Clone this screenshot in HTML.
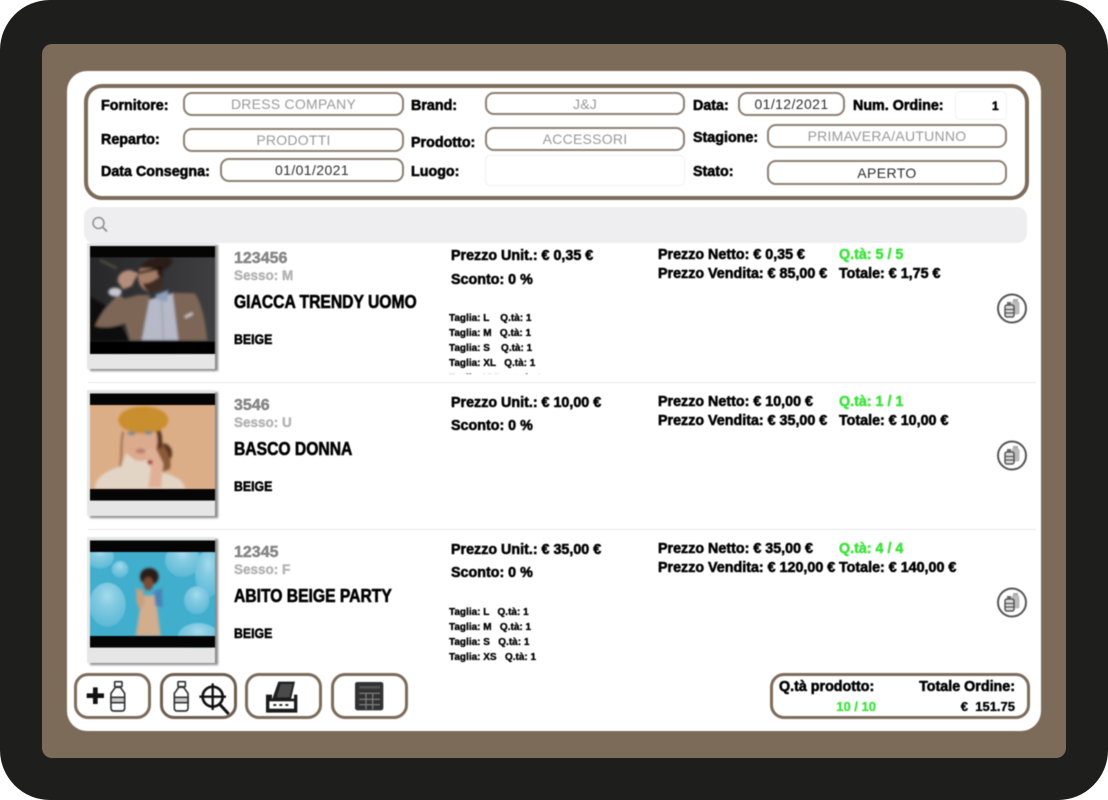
<!DOCTYPE html>
<html><head><meta charset="utf-8"><style>
html,body{margin:0;padding:0;background:#fff}
#p{position:relative;width:1108px;height:800px;overflow:hidden;font-family:"Liberation Sans",sans-serif}
#o{position:absolute;left:0;top:0;width:1108px;height:800px;background:#1e1e1c;border-radius:50px}
#b{position:absolute;left:42px;top:44px;width:1024px;height:714px;background:#7d6b5a;border-radius:10px}
#c{position:absolute;left:0;top:0;width:1108px;height:800px;filter:blur(.5px)}
#w{position:absolute;left:67px;top:71px;width:974px;height:660px;background:#fff;border-radius:20px}
.a{position:absolute;white-space:nowrap;line-height:16px}
.l{font-weight:bold;font-size:14.3px;color:#000;-webkit-text-stroke:.55px #000;transform-origin:0 50%;margin-top:1px}
.t{font-size:18px;transform:scaleX(.87);-webkit-text-stroke:.6px #000;margin-top:0}
.e{font-size:14px;transform:scaleX(.88);margin-top:0}
.n{color:#858585;-webkit-text-stroke:.45px #858585;font-size:16px;margin-top:0}
.x{color:#b4b4b4;-webkit-text-stroke:.45px #b4b4b4;font-size:13.500px}
.f{position:absolute;box-sizing:border-box;border:2px solid #8d7f72;border-radius:9px;background:#fff;text-align:center;font-size:14px;color:#999;display:flex;align-items:center;justify-content:center;letter-spacing:.25px}
.k{color:#2e2e2e;letter-spacing:.4px}
.s{position:absolute;left:449px;font-weight:bold;font-size:10px;line-height:15px;-webkit-text-stroke:.35px #000;white-space:pre;overflow:hidden}
.card{position:absolute;left:87px;width:128px;height:126px;background:#e6e6e6;box-shadow:3px 2px 2px #8a8a8a}
.sep{position:absolute;left:88px;width:948px;height:1px;background:#e8e8ea}
.btn{position:absolute;top:673px;width:77px;height:46px;box-sizing:border-box;border:3px solid #7d6b5a;border-radius:14px;background:#fff}
svg{position:absolute}
.g{color:#37e437;-webkit-text-stroke:.45px #37e437}
</style></head><body><div id="p">
<div id="o"></div><div id="b"></div>
<div id="c"><div id="w"></div>
<div style="position:absolute;left:84px;top:84px;width:945px;height:116px;box-sizing:border-box;border:4px solid #7d6b5a;border-radius:18px"></div>

<span class="a l" style="left:101px;top:97px">Fornitore:</span>
<span class="a l" style="left:101px;top:131px">Reparto:</span>
<span class="a l" style="left:101px;top:163px">Data Consegna:</span>
<span class="a l" style="left:411px;top:97px">Brand:</span>
<span class="a l" style="left:411px;top:134px">Prodotto:</span>
<span class="a l" style="left:411px;top:163px">Luogo:</span>
<span class="a l" style="left:693px;top:97px">Data:</span>
<span class="a l" style="left:853px;top:97px">Num. Ordine:</span>
<span class="a l" style="left:693px;top:129px">Stagione:</span>
<span class="a l" style="left:693px;top:163px">Stato:</span>

<div class="f" style="left:183px;top:92px;width:221px;height:24px">DRESS COMPANY</div>
<div class="f" style="left:183px;top:128px;width:221px;height:24px">PRODOTTI</div>
<div class="f k" style="left:220px;top:158px;width:184px;height:24px">01/01/2021</div>
<div class="f" style="left:485px;top:92px;width:200px;height:23px">J&amp;J</div>
<div class="f" style="left:485px;top:127px;width:200px;height:24px">ACCESSORI</div>
<div class="f" style="left:485px;top:155px;width:200px;height:31px;border:1px solid #f0f0f0;border-radius:5px"></div>
<div class="f k" style="left:738px;top:92px;width:107px;height:24px">01/12/2021</div>
<div class="f" style="left:955px;top:91px;width:52px;height:29px;border:1px solid #f0f0f0;border-radius:5px"></div>
<span class="a l" style="left:992px;top:97px;font-size:12px">1</span>
<div class="f" style="left:767px;top:124px;width:240px;height:24px">PRIMAVERA/AUTUNNO</div>
<div class="f k" style="left:767px;top:160px;width:240px;height:25px">APERTO</div>

<div style="position:absolute;left:84px;top:207px;width:943px;height:36px;background:#eeeef0;border-radius:10px"></div>
<svg style="left:90px;top:215px" width="20" height="20" viewBox="0 0 20 20"><circle cx="8.500" cy="8" r="5.500" fill="none" stroke="#8e8e93" stroke-width="1.500"/><path d="M12.500 12l4.500 4.500" stroke="#8e8e93" stroke-width="1.800"/></svg>

<!-- Row 1 -->
<div class="card" style="top:243px"></div>
<svg style="left:80px;top:240px" width="150" height="140" viewBox="0 0 450 420"><defs>
<filter id="fb" x="-10%" y="-10%" width="120%" height="120%"><feGaussianBlur stdDeviation="4"/></filter>
<filter id="fs"><feGaussianBlur stdDeviation="1.500"/></filter>
<clipPath id="c1"><rect x="30" y="18" width="375" height="324"/></clipPath><clipPath id="c2"><rect x="30" y="25" width="375" height="322"/></clipPath>
<radialGradient id="bl" cx=".5" cy=".3" r=".7"><stop offset="0" stop-color="#a6dcec"/><stop offset=".35" stop-color="#84cbe2"/><stop offset="1" stop-color="#5cb9d6"/></radialGradient>
<linearGradient id="mb" x1="0" y1="0" x2="1" y2="0"><stop offset="0" stop-color="#27272a"/><stop offset="1" stop-color="#3f3f42"/></linearGradient>
</defs>
<g clip-path="url(#c1)"><rect x="30" y="18" width="375" height="324" fill="url(#mb)"/>
<g filter="url(#fb)">
<path d="M30 170L100 210L150 305H30Z" fill="#0d0d0e"/>
<path d="M60 60L110 85" stroke="#5c5644" stroke-width="6"/>
<path d="M45 258C65 215 90 185 115 165L135 175L175 165L210 165L188 302H150L135 250C100 262 70 265 45 258Z" fill="#7d6656"/>
<path d="M272 158L345 160C370 200 378 260 382 302H292Z" fill="#7d6656"/>
<path d="M208 178L278 160L295 302H185Z" fill="#b6b9c8"/>
<path d="M315 232L338 220" stroke="#cfcfcf" stroke-width="7"/>
<path d="M245 175L250 300" stroke="#93949f" stroke-width="3"/>
<path d="M225 165L265 150L262 185L235 180Z" fill="#8fa0bb"/>
<ellipse cx="208" cy="110" rx="34" ry="44" fill="#a47e68"/>
<path d="M190 128C205 135 225 118 245 105L248 130C240 150 225 160 208 155C195 150 190 140 190 128Z" fill="#3c2a22"/>
<path d="M180 85C190 60 225 50 250 52L262 48L280 62L268 80L250 90L247 115L232 105L230 85Z" fill="#2a1d18"/>
<path d="M170 100L245 84" stroke="#0e0e0e" stroke-width="7"/>
<path d="M113 125C112 105 125 92 150 90L175 100L165 118L155 138L130 148Z" fill="#b48e7c"/>
<ellipse cx="105" cy="156" rx="20" ry="13" fill="#c8c8d0"/>
</g><rect x="30" y="18" width="375" height="34" fill="#050505"/><rect x="30" y="305" width="375" height="37" fill="#050505" filter="url(#fs)"/></g></svg>
<span class="a l n" style="left:234px;top:251px">123456</span>
<span class="a l x" style="left:234px;top:267px">Sesso: M</span>
<span class="a l t" style="left:234px;top:294px">GIACCA TRENDY UOMO</span>
<span class="a l e" style="left:234px;top:331px">BEIGE</span>
<span class="a l" style="left:451px;top:247px">Prezzo Unit.: € 0,35 €</span>
<span class="a l" style="left:451px;top:271px">Sconto: 0 %</span>
<div class="s" style="top:311px;height:63px">Taglia: L    Q.tà: 1
Taglia: M   Q.tà: 1
Taglia: S    Q.tà: 1
Taglia: XL   Q.tà: 1
Taglia: XXL   Q.tà: 1</div>
<span class="a l" style="left:658px;top:246px">Prezzo Netto: € 0,35 €</span>
<span class="a l" style="left:658px;top:265px">Prezzo Vendita: € 85,00 €</span>
<span class="a l g" style="left:839px;top:246px">Q.tà: 5 / 5</span>
<span class="a l" style="left:839px;top:265px">Totale: € 1,75 €</span>
<div class="sep" style="top:382px"></div>

<!-- Row 2 -->
<div class="card" style="top:390px"></div>
<svg style="left:80px;top:385px" width="150" height="140" viewBox="0 0 450 420">
<g clip-path="url(#c2)"><rect x="30" y="25" width="375" height="322" fill="#dcae88"/>
<g filter="url(#fb)">
<ellipse cx="250" cy="205" rx="26" ry="30" fill="#54301f"/>
<path d="M232 150C250 180 280 220 270 252L245 262L225 180Z" fill="#8a5a38"/>
<path d="M45 312C45 280 70 262 125 242L138 205L200 225L240 262C280 268 312 285 316 312Z" fill="#e3d5c6"/>
<ellipse cx="182" cy="168" rx="50" ry="60" fill="#dcaa8c"/>
<path d="M130 140C120 175 128 215 120 245" stroke="#8c5a3c" stroke-width="5" fill="none"/>
<path d="M232 130C244 160 240 180 238 190" stroke="#54301f" stroke-width="14" fill="none"/>
<ellipse cx="190" cy="105" rx="75" ry="41" fill="#c98e2e"/>
<path d="M193 195L226 188L250 236L243 308H205L212 250Z" fill="#e0b096"/><ellipse cx="210" cy="232" rx="8" ry="7" fill="#a8242a"/>
<ellipse cx="155" cy="145" rx="12" ry="6" fill="#7d888c"/><ellipse cx="205" cy="143" rx="12" ry="6" fill="#7d888c"/><ellipse cx="182" cy="198" rx="15" ry="7" fill="#b87c6c"/>
</g><rect x="30" y="25" width="375" height="35" fill="#050505"/><rect x="30" y="312" width="375" height="35" fill="#050505"/></g></svg>
<span class="a l n" style="left:234px;top:398px">3546</span>
<span class="a l x" style="left:234px;top:414px">Sesso: U</span>
<span class="a l t" style="left:234px;top:441px">BASCO DONNA</span>
<span class="a l e" style="left:234px;top:478px">BEIGE</span>
<span class="a l" style="left:451px;top:394px">Prezzo Unit.: € 10,00 €</span>
<span class="a l" style="left:451px;top:417px">Sconto: 0 %</span>
<span class="a l" style="left:658px;top:393px">Prezzo Netto: € 10,00 €</span>
<span class="a l" style="left:658px;top:412px">Prezzo Vendita: € 35,00 €</span>
<span class="a l g" style="left:839px;top:393px">Q.tà: 1 / 1</span>
<span class="a l" style="left:839px;top:412px">Totale: € 10,00 €</span>
<div class="sep" style="top:529px"></div>

<!-- Row 3 -->
<div class="card" style="top:537px"></div>
<svg style="left:80px;top:532px" width="150" height="140" viewBox="0 0 450 420">
<g clip-path="url(#c2)"><rect x="30" y="25" width="375" height="322" fill="#41aecd"/>
<g filter="url(#fs)">
<ellipse cx="60" cy="75" rx="42" ry="35" fill="url(#bl)"/><circle cx="120" cy="112" r="25" fill="url(#bl)"/>
<ellipse cx="308" cy="85" rx="53" ry="50" fill="url(#bl)"/><ellipse cx="385" cy="125" rx="40" ry="70" fill="url(#bl)"/>
<ellipse cx="82" cy="218" rx="55" ry="66" fill="url(#bl)"/><ellipse cx="350" cy="205" rx="38" ry="42" fill="url(#bl)"/><ellipse cx="355" cy="315" rx="62" ry="42" fill="url(#bl)"/>
</g>
<g filter="url(#fb)">
<path d="M186 190L226 190L242 312H167Z" fill="#d2ad8e"/>
<path d="M168 168L190 175L192 215L180 236L170 212Z" fill="#c99f80"/><path d="M222 178L246 168L248 225L226 222Z" fill="#4a82b6"/>
<ellipse cx="208" cy="134" rx="28" ry="26" fill="#2a1a14"/><ellipse cx="205" cy="155" rx="15" ry="20" fill="#7a4c36"/>
</g><rect x="30" y="25" width="375" height="35" fill="#050505"/><rect x="30" y="312" width="375" height="35" fill="#050505"/></g></svg>
<span class="a l n" style="left:234px;top:545px">12345</span>
<span class="a l x" style="left:234px;top:561px">Sesso: F</span>
<span class="a l t" style="left:234px;top:588px">ABITO BEIGE PARTY</span>
<span class="a l e" style="left:234px;top:625px">BEIGE</span>
<span class="a l" style="left:451px;top:541px">Prezzo Unit.: € 35,00 €</span>
<span class="a l" style="left:451px;top:564px">Sconto: 0 %</span>
<div class="s" style="top:605px">Taglia: L   Q.tà: 1
Taglia: M   Q.tà: 1
Taglia: S   Q.tà: 1
Taglia: XS   Q.tà: 1</div>
<span class="a l" style="left:658px;top:540px">Prezzo Netto: € 35,00 €</span>
<span class="a l" style="left:658px;top:559px">Prezzo Vendita: € 120,00 €</span>
<span class="a l g" style="left:839px;top:540px">Q.tà: 4 / 4</span>
<span class="a l" style="left:839px;top:559px">Totale: € 140,00 €</span>

<!-- Round stock icons -->
<svg style="left:996px;top:293px" width="32" height="32" viewBox="0 0 32 32"><circle cx="16" cy="15.500" r="14" fill="#fff" stroke="#555" stroke-width="2"/><rect x="17" y="6" width="5" height="3" fill="#aaa"/><rect x="15.500" y="8.500" width="8" height="13" rx="2" fill="#bbb"/><rect x="11" y="9" width="4" height="3" fill="#666"/><rect x="9" y="12" width="9" height="12" rx="2" fill="#ddd" stroke="#555" stroke-width="1.500"/><path d="M9 16.500h9M9 20h9" stroke="#555" stroke-width="1.200"/></svg>
<svg style="left:996px;top:440px" width="32" height="32" viewBox="0 0 32 32"><circle cx="16" cy="15.500" r="14" fill="#fff" stroke="#555" stroke-width="2"/><rect x="17" y="6" width="5" height="3" fill="#aaa"/><rect x="15.500" y="8.500" width="8" height="13" rx="2" fill="#bbb"/><rect x="11" y="9" width="4" height="3" fill="#666"/><rect x="9" y="12" width="9" height="12" rx="2" fill="#ddd" stroke="#555" stroke-width="1.500"/><path d="M9 16.500h9M9 20h9" stroke="#555" stroke-width="1.200"/></svg>
<svg style="left:996px;top:587px" width="32" height="32" viewBox="0 0 32 32"><circle cx="16" cy="15.500" r="14" fill="#fff" stroke="#555" stroke-width="2"/><rect x="17" y="6" width="5" height="3" fill="#aaa"/><rect x="15.500" y="8.500" width="8" height="13" rx="2" fill="#bbb"/><rect x="11" y="9" width="4" height="3" fill="#666"/><rect x="9" y="12" width="9" height="12" rx="2" fill="#ddd" stroke="#555" stroke-width="1.500"/><path d="M9 16.500h9M9 20h9" stroke="#555" stroke-width="1.200"/></svg>

<!-- Toolbar -->
<div class="btn" style="left:74px"></div><div class="btn" style="left:160px;border-color:#6e5e4f"></div><div class="btn" style="left:245px"></div><div class="btn" style="left:331px"></div>
<svg style="left:60px;top:660px" width="360" height="80" viewBox="0 0 1080 240">
<path d="M80 107H132M106 82V132" stroke="#111" stroke-width="14" fill="none"/>
<g fill="none" stroke="#333" stroke-width="5"><rect x="164" y="65" width="22" height="15" rx="2"/><path d="M166 82L153 100V144Q153 153 162 153H185Q194 153 194 144V100L181 82Z" fill="#fff"/><path d="M153 112H194V128H153Z" fill="#ccc"/></g>
<g fill="none" stroke="#333" stroke-width="5"><rect x="354" y="65" width="22" height="15" rx="2"/><path d="M356 82L343 100V144Q343 153 352 153H375Q384 153 384 144V100L371 82Z" fill="#fff"/><path d="M343 112H384V128H343Z" fill="#ccc"/></g>
<g fill="none" stroke="#111"><circle cx="458" cy="110" r="30" stroke-width="8"/><path d="M458 70V150M418 110H498" stroke-width="7"/><path d="M480 134L506 162" stroke-width="9"/></g>
<path d="M655 65H705L692 122H635Z" fill="#1f1f1f"/><path d="M662 72H698L688 112H650Z" fill="#4a4a4a"/><path d="M618 104H636V116H702V104H712V158H618Z" fill="#1a1a1a"/><rect x="628" y="124" width="74" height="22" fill="#fff"/><path d="M640 135h9M658 135h9M676 135h9" stroke="#111" stroke-width="5"/>
<rect x="885" y="66" width="85" height="85" rx="7" fill="#323232"/><path d="M898 100H960M898 118H960M898 134H960M918 98V148M938 98V148" stroke="#7a7a7a" stroke-width="4"/><path d="M898 82H960" stroke="#555" stroke-width="8"/>
</svg>

<div style="position:absolute;left:770px;top:673px;width:260px;height:46px;box-sizing:border-box;border:3px solid #7d6b5a;border-radius:14px;background:#fff"></div>
<span class="a l" style="left:779px;top:678px">Q.tà prodotto:</span>
<span class="a l" style="right:93px;top:678px">Totale Ordine:</span>
<span class="a l g" style="right:232px;top:698px;font-size:13px;-webkit-text-stroke:.3px #37e437">10 / 10</span>
<span class="a l" style="right:93px;top:698px;font-size:13px;-webkit-text-stroke:.35px #000">€&nbsp; 151.75</span>
</div></div></body></html>
